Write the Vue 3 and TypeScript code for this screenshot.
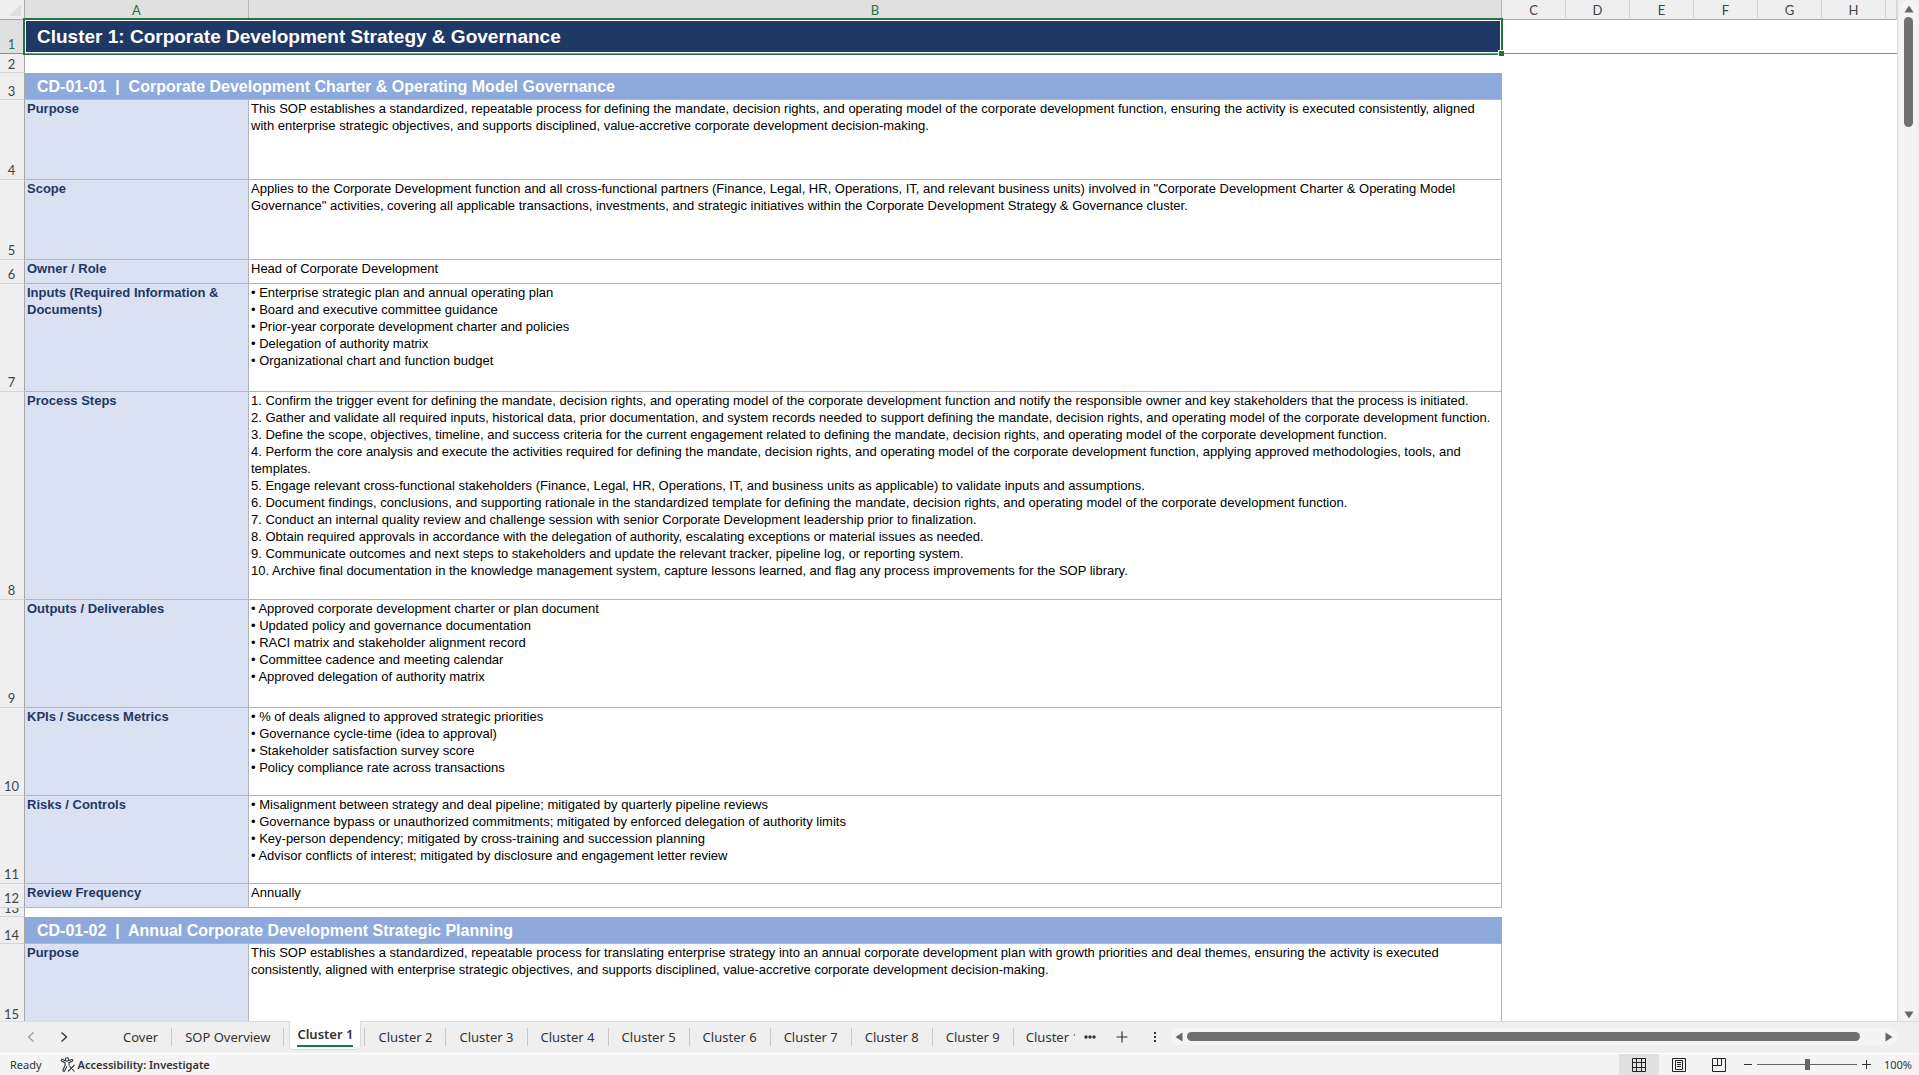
<script setup lang="ts">
interface Row { n: number; h: number; kind: 'title' | 'blank' | 'section' | 'item'; label?: string; text?: string }

const rows: Row[] = [
  { n: 1, h: 34, kind: 'title', label: 'Cluster 1: Corporate Development Strategy & Governance' },
  { n: 2, h: 19, kind: 'blank' },
  { n: 3, h: 27, kind: 'section', label: 'CD-01-01  |  Corporate Development Charter & Operating Model Governance' },
  { n: 4, h: 80, kind: 'item', label: 'Purpose', text: `This SOP establishes a standardized, repeatable process for defining the mandate, decision rights, and operating model of the corporate development function, ensuring the activity is executed consistently, aligned
with enterprise strategic objectives, and supports disciplined, value-accretive corporate development decision-making.` },
  { n: 5, h: 80, kind: 'item', label: 'Scope', text: `Applies to the Corporate Development function and all cross-functional partners (Finance, Legal, HR, Operations, IT, and relevant business units) involved in "Corporate Development Charter & Operating Model
Governance" activities, covering all applicable transactions, investments, and strategic initiatives within the Corporate Development Strategy & Governance cluster.` },
  { n: 6, h: 24, kind: 'item', label: 'Owner / Role', text: 'Head of Corporate Development' },
  { n: 7, h: 108, kind: 'item', label: 'Inputs (Required Information &\nDocuments)', text: `• Enterprise strategic plan and annual operating plan
• Board and executive committee guidance
• Prior-year corporate development charter and policies
• Delegation of authority matrix
• Organizational chart and function budget` },
  { n: 8, h: 208, kind: 'item', label: 'Process Steps', text: `1. Confirm the trigger event for defining the mandate, decision rights, and operating model of the corporate development function and notify the responsible owner and key stakeholders that the process is initiated.
2. Gather and validate all required inputs, historical data, prior documentation, and system records needed to support defining the mandate, decision rights, and operating model of the corporate development function.
3. Define the scope, objectives, timeline, and success criteria for the current engagement related to defining the mandate, decision rights, and operating model of the corporate development function.
4. Perform the core analysis and execute the activities required for defining the mandate, decision rights, and operating model of the corporate development function, applying approved methodologies, tools, and
templates.
5. Engage relevant cross-functional stakeholders (Finance, Legal, HR, Operations, IT, and business units as applicable) to validate inputs and assumptions.
6. Document findings, conclusions, and supporting rationale in the standardized template for defining the mandate, decision rights, and operating model of the corporate development function.
7. Conduct an internal quality review and challenge session with senior Corporate Development leadership prior to finalization.
8. Obtain required approvals in accordance with the delegation of authority, escalating exceptions or material issues as needed.
9. Communicate outcomes and next steps to stakeholders and update the relevant tracker, pipeline log, or reporting system.
10. Archive final documentation in the knowledge management system, capture lessons learned, and flag any process improvements for the SOP library.` },
  { n: 9, h: 108, kind: 'item', label: 'Outputs / Deliverables', text: `• Approved corporate development charter or plan document
• Updated policy and governance documentation
• RACI matrix and stakeholder alignment record
• Committee cadence and meeting calendar
• Approved delegation of authority matrix` },
  { n: 10, h: 88, kind: 'item', label: 'KPIs / Success Metrics', text: `• % of deals aligned to approved strategic priorities
• Governance cycle-time (idea to approval)
• Stakeholder satisfaction survey score
• Policy compliance rate across transactions` },
  { n: 11, h: 88, kind: 'item', label: 'Risks / Controls', text: `• Misalignment between strategy and deal pipeline; mitigated by quarterly pipeline reviews
• Governance bypass or unauthorized commitments; mitigated by enforced delegation of authority limits
• Key-person dependency; mitigated by cross-training and succession planning
• Advisor conflicts of interest; mitigated by disclosure and engagement letter review` },
  { n: 12, h: 24, kind: 'item', label: 'Review Frequency', text: 'Annually' },
  { n: 13, h: 9, kind: 'blank' },
  { n: 14, h: 27, kind: 'section', label: 'CD-01-02  |  Annual Corporate Development Strategic Planning' },
  { n: 15, h: 80, kind: 'item', label: 'Purpose', text: `This SOP establishes a standardized, repeatable process for translating enterprise strategy into an annual corporate development plan with growth priorities and deal themes, ensuring the activity is executed
consistently, aligned with enterprise strategic objectives, and supports disciplined, value-accretive corporate development decision-making.` },
]
const cols: string[] = ['C', 'D', 'E', 'F', 'G', 'H']
const tabs: string[] = ['Cover', 'SOP Overview', 'Cluster 1', 'Cluster 2', 'Cluster 3', 'Cluster 4', 'Cluster 5', 'Cluster 6', 'Cluster 7', 'Cluster 8', 'Cluster 9']
</script>

<template>
  <div class="app">
    <div class="work">
      <div class="grid">
        <table class="sheet">
          <colgroup>
            <col class="c-num"><col class="c-a"><col class="c-b">
            <col v-for="c in cols" :key="c" class="c-s"><col>
          </colgroup>
          <thead>
            <tr>
              <th class="corner"><svg width="12" height="12" viewBox="0 0 12 12"><path d="M12 0V12H0Z" fill="#dfdfdf" /></svg></th>
              <th class="on">A</th>
              <th class="on">B</th>
              <th v-for="c in cols" :key="c">{{ c }}</th>
              <th class="rest"></th>
            </tr>
          </thead>
          <tbody>
            <tr v-for="r in rows" :key="r.n" :class="r.kind" :style="{ height: r.h + 'px' }">
              <th scope="row"><div class="num" :style="{ height: r.h - 1 + 'px' }"><span>{{ r.n }}</span></div></th>
              <template v-if="r.kind === 'item'">
                <td class="label">{{ r.label }}</td>
                <td class="text">{{ r.text }}</td>
              </template>
              <td v-else colspan="2" class="wide">
                <div v-if="r.kind === 'title'" class="selected">{{ r.label }}<i class="handle"></i></div>
                <template v-else>{{ r.label }}</template>
              </td>
              <td colspan="7" class="empty"></td>
            </tr>
          </tbody>
        </table>
      </div>
      <div class="vscroll">
        <button aria-label="Scroll up"><svg width="10" height="8" viewBox="0 0 10 8"><path d="M5 .5L9.500 7.500H.5Z" fill="#666" /></svg></button>
        <div class="vthumb"></div>
        <button class="down" aria-label="Scroll down"><svg width="10" height="8" viewBox="0 0 10 8"><path d="M.5 .5H9.500L5 7.500Z" fill="#666" /></svg></button>
      </div>
    </div>

    <div class="tabbar">
      <div class="nav">
        <button aria-label="Previous sheets"><svg width="8" height="10" viewBox="0 0 8 10"><path d="M6.500 .5L1.500 5L6.500 9.500" fill="none" stroke="#a0a0a0" stroke-width="1.300" /></svg></button>
        <button aria-label="Next sheets"><svg width="8" height="10" viewBox="0 0 8 10"><path d="M1.500 .5L6.500 5L1.500 9.500" fill="none" stroke="#333" stroke-width="1.300" /></svg></button>
      </div>
      <button v-for="t in tabs" :key="t" class="tab" :class="{ active: t === 'Cluster 1' }"><span>{{ t }}</span></button>
      <button class="tab cut"><span>Cluster 10</span></button>
      <button class="more" aria-label="More sheets"><svg width="12" height="4" viewBox="0 0 12 4"><g fill="#333"><circle cx="2" cy="2" r="1.700" /><circle cx="6" cy="2" r="1.700" /><circle cx="10" cy="2" r="1.700" /></g></svg></button>
      <button class="add" aria-label="New sheet"><svg width="12" height="12" viewBox="0 0 12 12"><path d="M6 .5V11.500M.5 6H11.500" stroke="#333" stroke-width="1.200" /></svg></button>
      <button class="grip" aria-label="Resize tabs"><svg width="2" height="10" viewBox="0 0 2 10"><path d="M0 0h2v2H0zM0 4h2v2H0zM0 8h2v2H0z" fill="#333" /></svg></button>
      <div class="hscroll">
        <button aria-label="Scroll left"><svg width="8" height="10" viewBox="0 0 8 10"><path d="M7.500 .5V9.500L.5 5Z" fill="#666" /></svg></button>
        <div class="hthumb"></div>
        <button aria-label="Scroll right"><svg width="8" height="10" viewBox="0 0 8 10"><path d="M.5 .5V9.500L7.500 5Z" fill="#666" /></svg></button>
      </div>
    </div>

    <footer class="status">
      <span class="ready">Ready</span>
      <button class="access">
        <svg width="16" height="16" viewBox="0 0 16 16" fill="none" stroke="#333" stroke-width="1.100"><circle cx="7" cy="2.500" r="1.700" /><path d="M5.300 3.800L2.500 2.600C1.300 2.200.8 3.700 1.800 4.200L5 5.700V8.500L3 13C2.700 14.400 4.200 14.800 4.700 13.800L6.800 9.500M8.700 3.800L11.500 2.600C12.700 2.200 13.200 3.700 12.200 4.200L9 5.700V8M8 14.500L14.500 8M9 8.500L14.500 14.500" /></svg>
        <span>Accessibility: Investigate</span>
      </button>
      <div class="views">
        <button class="on" aria-label="Normal"><svg width="14" height="14" viewBox="0 0 14 14" fill="none" stroke="#222"><path d="M.5 .5H13.500V13.500H.5ZM.5 4.500H13.500M.5 9.500H13.500M4.500 .5V13.500M9.500 .5V13.500" /></svg></button>
        <button aria-label="Page layout"><svg width="14" height="14" viewBox="0 0 14 14" fill="none" stroke="#222"><path d="M.5 .5H13.500V13.500H.5ZM3.500 2.500H10.500V11.500H3.500ZM5 4.500H9M5 6.500H9M5 8.500H9" /></svg></button>
        <button aria-label="Page break preview"><svg width="14" height="14" viewBox="0 0 14 14" fill="none" stroke="#222"><path d="M.5 .5H13.500V13.500H.5ZM.5 7.500H9.500V.5M5.500 .5V7.500" /></svg></button>
      </div>
      <button class="z" aria-label="Zoom out"><svg width="8" height="9" viewBox="0 0 8 9"><path d="M0 4.500H8" stroke="#333" /></svg></button>
      <input type="range" aria-label="Zoom" min="0" max="200" value="100">
      <button class="z" aria-label="Zoom in"><svg width="9" height="9" viewBox="0 0 9 9"><path d="M0 4.500H9M4.500 0V9" stroke="#333" /></svg></button>
      <button class="pct">100%</button>
    </footer>
  </div>
</template>

<style>
html, body { margin: 0; overflow: hidden; }
</style>

<style scoped>
* { box-sizing: border-box; }
.app { height: 100vh; display: flex; flex-direction: column; background: #efefef; font-family: "Noto Sans", "Open Sans", sans-serif; font-size: 13px; color: #333; }
button { border: 0; padding: 0; margin: 0; background: none; font: inherit; color: inherit; display: flex; align-items: center; justify-content: center; }
svg { display: block; flex: none; }

.work { flex: 1; min-height: 0; display: flex; }
.grid { flex: 1; min-width: 0; overflow: hidden; background: #fff; border-right: 1px solid #dcdcdc; }
.sheet { width: 100%; table-layout: fixed; border-collapse: separate; border-spacing: 0; }
.c-num { width: 25px; }
.c-a { width: 224px; }
.c-b { width: 1253px; }
.c-s { width: 64px; }
th, td { padding: 0; }
thead th { height: 20px; background: #efefef; border-bottom: 1px solid #a6a6a6; border-right: 1px solid #d6d6d6; padding-top: 2px; font: 400 13px/17px Lato, sans-serif; color: #444; }
thead th.on { background: #e0e0e0; color: #217346; border-right-color: #b4b4b4; }
thead .corner { border-right-color: #a6a6a6; padding-top: 0; }
.corner svg { margin: 1px 0 0 9px; }

tbody th { background: #efefef; border-right: 1px solid #a6a6a6; border-bottom: 1px solid #d4d4d4; font: 400 13px/16px Lato, sans-serif; color: #444; vertical-align: bottom; }
.num { display: flex; align-items: flex-end; justify-content: center; overflow: hidden; padding-right: 1px; }
.item .num, .title .num { padding-bottom: 1px; }
.title th { background: #e0e0e0; color: #217346; border-bottom-color: #8c8c8c; }
.title .wide { vertical-align: top; }
.title .empty { border-bottom: 1px solid #8c8c8c; }
.wide { font: 700 16px/24px "Liberation Sans", Arial, sans-serif; color: #fff; white-space: pre; }
.section .wide { background: #8ea9db; padding: 2px 0 0 12px; border-bottom: 1px solid #b4b4b4; }
.selected { position: relative; height: 33px; margin-right: 1px; background: #1f3864; font-size: 19px; line-height: 34px; padding-left: 12px; box-shadow: inset 0 0 0 1px #fff, 0 0 0 2px #217346; }
.selected::after { content: ""; position: absolute; left: 0; right: 0; top: 100%; height: 1px; background: #8c8c8c; }
.handle { position: absolute; z-index: 1; right: -3px; bottom: -3px; width: 6px; height: 6px; background: #217346; border: 1px solid #fff; border-width: 1px 0 0 1px; }
.label, .text { vertical-align: top; white-space: pre; overflow: hidden; border-right: 1px solid #b4b4b4; border-bottom: 1px solid #b4b4b4; font: 13px/17px "Liberation Sans", Arial, sans-serif; padding-left: 2px; color: #000; }
.label { background: #d9e1f2; color: #1f3864; font-weight: 700; }

.vscroll { width: 17px; margin: 0 2px; display: flex; flex-direction: column; align-items: center; padding: 5px 0 2px; background: #f4f4f4; border-radius: 8px; }
.vthumb { width: 9px; height: 110px; margin-top: 4px; border-radius: 5px; background: #707070; }
.down { margin-top: auto; }

.tabbar { height: 32px; display: flex; align-items: center; border-top: 1px solid #dcdcdc; padding-bottom: 2px; }
.nav { width: 110px; display: flex; gap: 25px; padding-left: 27px; }
.tab { position: relative; height: 29px; padding: 0 14px 0 13px; line-height: 18px; white-space: nowrap; }
.tab::after { content: ""; position: absolute; right: 0; top: 6px; height: 18px; width: 1px; background: #c8c8c8; }
.tab.active { align-self: flex-start; height: 29px; margin: -1px 4px 0 5px; padding: 0 7px; background: #fff; border: 1px solid #dcdcdc; border-top: 0; border-radius: 0 0 5px 5px; font-weight: 600; }
.tab.active::after { right: -5px; top: 7px; }
.tab.active span { border-bottom: 2px solid #107c41; line-height: 21px; }
.cut { padding: 0 0 0 12px; }
.cut span { width: 49px; overflow: hidden; }
.cut::after { display: none; }
.more { margin-left: 9px; }
.add { margin-left: 20px; }
.grip { margin-left: 26px; }
.hscroll { flex: 1; margin: 0 22px 0 15px; height: 17px; display: flex; align-items: center; padding: 0 4px; background: #f4f4f4; border-radius: 8px; }
.hthumb { flex: 1; height: 9px; margin: 0 25px 0 4px; border-radius: 5px; background: #707070; }

.status { height: 22px; display: flex; align-items: center; background: #f4f4f4; border-top: 1px solid #fff; font-size: 11px; padding: 0 8px 0 10px; }
.access { gap: 2px; margin-left: 18px; font-weight: 600; }
.views { display: flex; margin-left: auto; height: 21px; }
.views button { width: 40px; }
.views .on { background: #e0e0e0; }
.z { margin-left: 5px; }
.pct { margin-left: 14px; width: 26px; }
input[type=range] { appearance: none; width: 100px; height: 16px; margin: 0 0 0 5px; background: linear-gradient(#666, #666) center / 100% 1px no-repeat; }
input[type=range]::-webkit-slider-thumb { appearance: none; width: 5px; height: 11px; background: #666; }
</style>
